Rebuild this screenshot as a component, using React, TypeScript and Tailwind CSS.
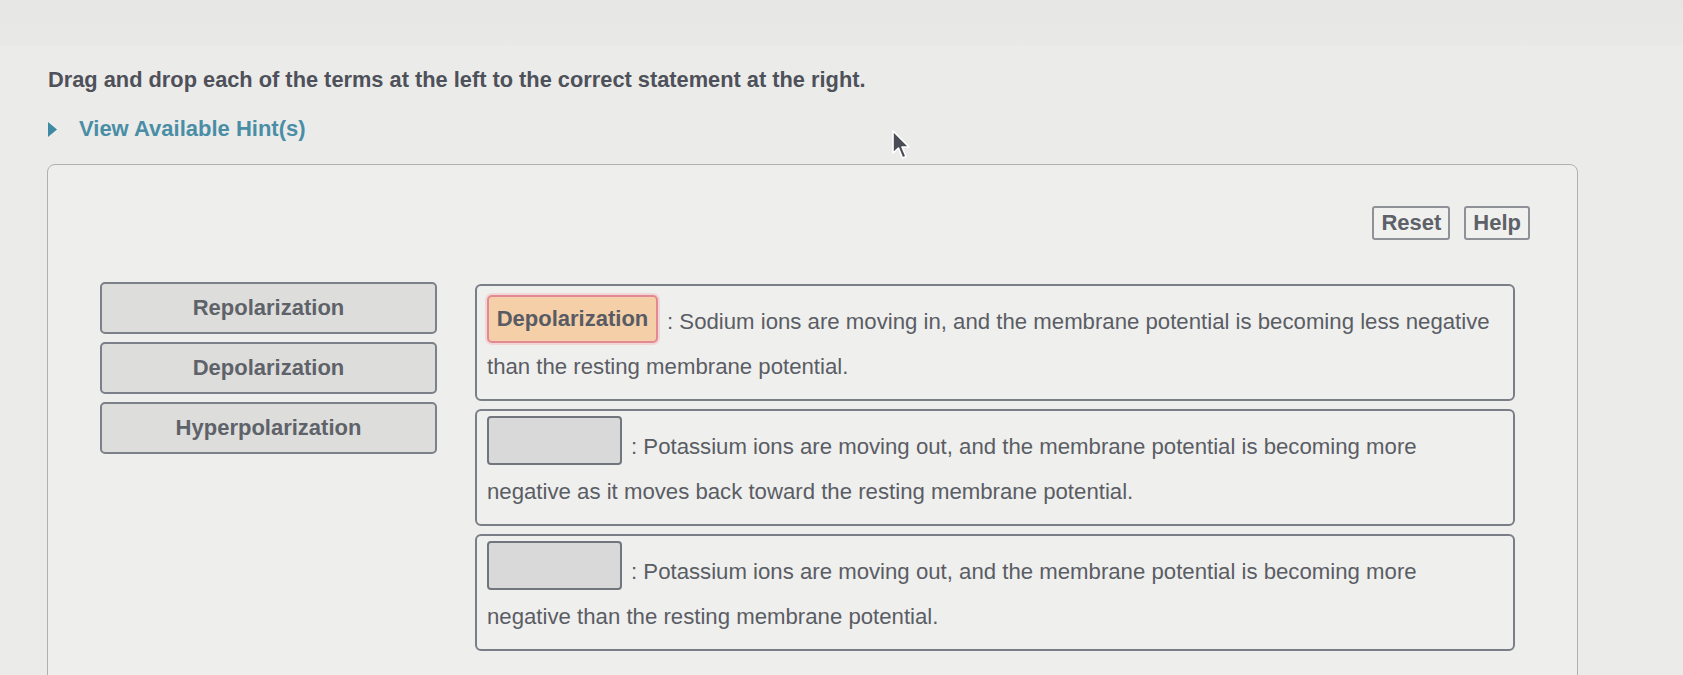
const terms = ["Repolarization", "Depolarization", "Hyperpolarization"];

const statements = [
  {
    filled: "Depolarization",
    first: "Sodium ions are moving in, and the membrane potential is becoming less negative",
    second: "than the resting membrane potential.",
  },
  {
    filled: null,
    first: "Potassium ions are moving out, and the membrane potential is becoming more",
    second: "negative as it moves back toward the resting membrane potential.",
  },
  {
    filled: null,
    first: "Potassium ions are moving out, and the membrane potential is becoming more",
    second: "negative than the resting membrane potential.",
  },
];

function Cursor() {
  return (
    <svg
      className="absolute left-[891px] top-[129px]"
      width="20"
      height="32"
      viewBox="0 0 20 32"
    >
      <path
        d="M2 2 L2 24 L7.5 19 L11.5 29 L15 27.5 L11 18 L18 18 Z"
        fill="#4a4d55"
        stroke="#ffffff"
        strokeWidth="1.6"
        strokeLinejoin="round"
      />
    </svg>
  );
}

export default function App() {
  return (
    <div
      className="relative w-[1683px] h-[675px] overflow-hidden bg-[#ebebea] text-[22px]"
      style={{ fontFamily: '"Liberation Sans", Arial, Helvetica, sans-serif' }}
    >
      <div className="h-[46px] bg-gradient-to-b from-[#e6e6e5] to-[#e9e9e8]" />
      <div className="pl-[48px] pt-[20px]">
        <h1 className="text-[21.8px] font-bold leading-[28px] text-[#4e5159]">
          Drag and drop each of the terms at the left to the correct statement at the right.
        </h1>
        <div className="mt-[21px] flex items-center gap-[22px] leading-[28px]">
          <svg width="9" height="15" viewBox="0 0 9 15">
            <path d="M0 0 L9 7.5 L0 15 Z" fill="#3d8aa2" />
          </svg>
          <span className="font-bold text-[#4a8ea6]">View Available Hint(s)</span>
        </div>
      </div>

      <div className="ml-[47px] mt-[21px] w-[1531px] h-[560px] rounded-t-lg border-[1.5px] border-[#aeb0b3] bg-[#eeeeed]">
        <div className="flex justify-end gap-[14px] pr-[47px] pt-[41px]">
          {["Reset", "Help"].map((b) => (
            <button
              key={b}
              className="h-[34px] rounded-[3px] border-2 border-[#8e9197] bg-[#f0f0ef] px-[7px] font-bold leading-[28px] text-[#5d6168]"
            >
              {b}
            </button>
          ))}
        </div>

        <div className="mt-[42px] flex gap-[38px] pl-[52px]">
          <div className="flex w-[337px] flex-col gap-[8px]">
            {terms.map((t) => (
              <div
                key={t}
                className="flex h-[52px] items-start justify-center rounded-[5px] border-2 border-[#7c8088] bg-[#dddddc] pt-[10px] font-bold leading-[28px] text-[#5e6269]"
              >
                {t}
              </div>
            ))}
          </div>

          <div className="mt-[2px] flex w-[1040px] flex-col gap-[8px]">
            {statements.map((s, i) => (
              <div
                key={i}
                className="h-[117px] rounded-[6px] border-[2.5px] border-[#7a7e86] bg-[#efefee] pl-[10px] pt-[7px] text-[22.2px] leading-[47px] text-[#5a5d64]"
              >
                {s.filled ? (
                  <span className="mt-[1px] inline-block h-[48px] w-[171px] rounded-[5px] border-2 border-[#e28a93] bg-[#f4cfa8] text-center align-middle text-[22px] font-bold leading-[43px] text-[#585b63] shadow-[0_0_0_2px_#f2d6d6]">
                    {s.filled}
                  </span>
                ) : (
                  <span className="inline-block h-[49px] w-[135px] -translate-y-[3px] rounded-[4px] border-2 border-[#71757e] bg-[#d9d9d9] align-middle" />
                )}
                <span className="ml-[9px] inline-block translate-y-[3px] align-middle">
                  : {s.first}
                </span>
                <br />
                <span>{s.second}</span>
              </div>
            ))}
          </div>
        </div>
      </div>

      <Cursor />
    </div>
  );
}
